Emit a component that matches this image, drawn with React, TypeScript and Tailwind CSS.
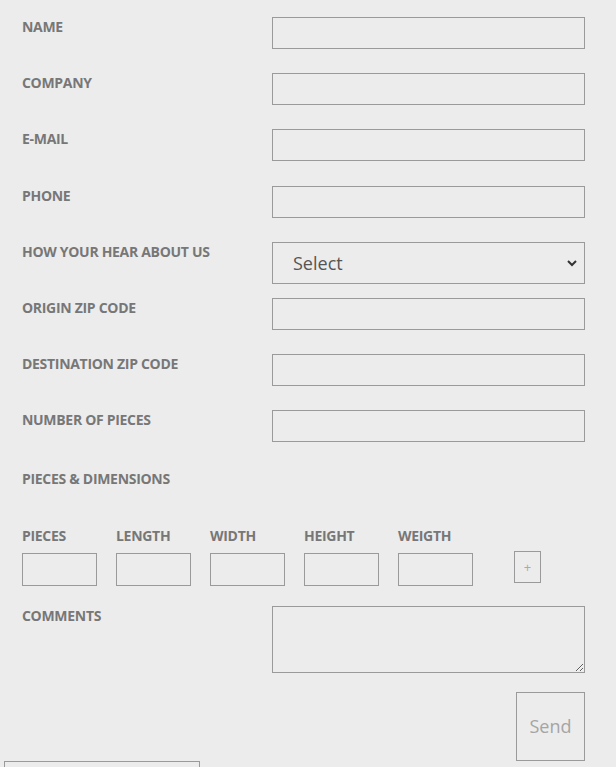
import { useState } from "react";

const fields = [
  "NAME",
  "COMPANY",
  "E-MAIL",
  "PHONE",
  "HOW YOUR HEAR ABOUT US",
  "ORIGIN ZIP CODE",
  "DESTINATION ZIP CODE",
  "NUMBER OF PIECES",
];

const dims = ["PIECES", "LENGTH", "WIDTH", "HEIGHT", "WEIGTH"];

const labelCls =
  "text-[14px] font-bold text-[#777] leading-[20px] tracking-[-0.3px]";

export default function App() {
  const [source, setSource] = useState("");

  return (
    <div
      className="min-h-[767px] bg-[#ececec] overflow-hidden"
      style={{ fontFamily: "'Open Sans', 'Noto Sans', sans-serif" }}
    >
      <form className="pl-[22px] pr-[31px] pt-[17px]">
        {fields.map((f, i) => (
          <div key={f} className={`flex ${i === 2 ? "h-[57px]" : "h-[56px]"}`}>
            <label className={`${labelCls} w-[250px]`}>{f}</label>
            {f === "HOW YOUR HEAR ABOUT US" ? (
              <div className="relative flex-1 h-[42px]">
                <select
                  value={source}
                  onChange={(e) => setSource(e.target.value)}
                  className="appearance-none w-full h-full border border-[#9a9a9a] bg-transparent pl-[20px] text-[18px] text-[#555] outline-none"
                >
                  <option value="">Select</option>
                  <option value="web">Web search</option>
                  <option value="friend">Friend</option>
                </select>
                <svg
                  className="absolute right-[7px] top-[16px] pointer-events-none"
                  width="12"
                  height="10"
                  viewBox="0 0 12 10"
                  fill="none"
                  stroke="#333"
                  strokeWidth="2"
                >
                  <path d="M2 3l4 4 4-4" />
                </svg>
              </div>
            ) : (
              <input className="flex-1 h-[32px] border border-[#9a9a9a] bg-transparent outline-none px-2" />
            )}
          </div>
        ))}

        <div className="h-[60px]">
          <span className={labelCls}>PIECES &amp; DIMENSIONS</span>
        </div>

        <div className="flex items-start h-[80px]">
          {dims.map((d) => (
            <div key={d} className="flex flex-col w-[94px] shrink-0">
              <span className={`${labelCls} h-[27px]`}>{d}</span>
              <input className="w-[75px] h-[33px] border border-[#9a9a9a] bg-transparent outline-none" />
            </div>
          ))}
          <button
            type="button"
            className="ml-[22px] mt-[25px] w-[27px] h-[32px] border border-[#9a9a9a] text-[#aaa] text-[13px] leading-none"
          >
            +
          </button>
        </div>

        <div className="flex">
          <label className={`${labelCls} w-[250px]`}>COMMENTS</label>
          <textarea className="flex-1 h-[67px] border border-[#9a9a9a] bg-transparent outline-none" />
        </div>

        <div className="flex justify-end mt-[19px]">
          <button
            type="submit"
            className="w-[69px] h-[69px] border border-[#9a9a9a] text-[#a5a5a5] text-[18px]"
          >
            Send
          </button>
        </div>
      </form>
      <div className="ml-[4px] w-[196px] h-[20px] border border-[#9a9a9a]" />
    </div>
  );
}
